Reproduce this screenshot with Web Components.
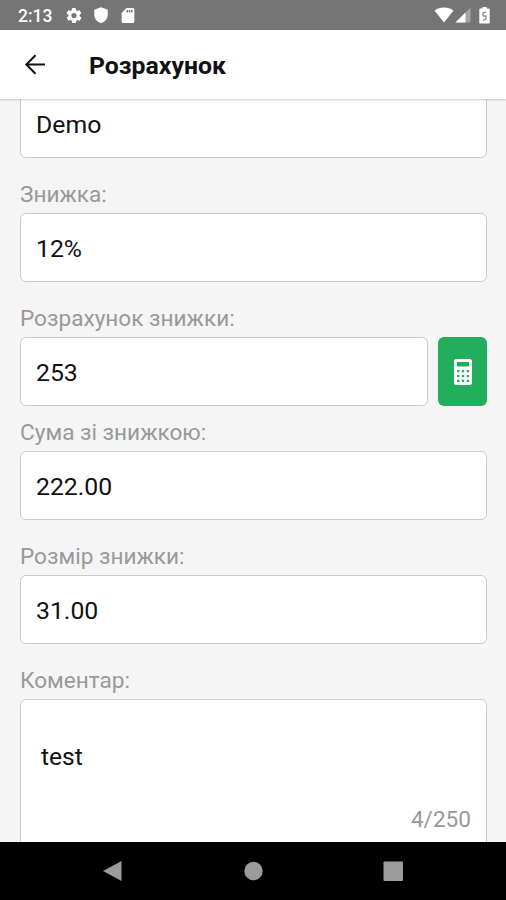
<!DOCTYPE html>
<html lang="uk">
<head>
<meta charset="utf-8">
<meta name="viewport" content="width=device-width, initial-scale=1">
<title>Розрахунок</title>
<style>
    body {
        margin: 0;
        font-family: Roboto, "Liberation Sans", sans-serif;
        color: #111;
        background: #000;
    }
</style>
</head>
<body>
<calc-screen>
    <status-bar slot="top" time="2:13"></status-bar>
    <app-header slot="top">Розрахунок</app-header>

    <form-field>Demo</form-field>
    <form-field label="Знижка:">12%</form-field>
    <form-field label="Розрахунок знижки:" tight>
        253
        <calc-button slot="action"></calc-button>
    </form-field>
    <form-field label="Сума зі знижкою:">222.00</form-field>
    <form-field label="Розмір знижки:">31.00</form-field>
    <comment-field label="Коментар:" counter="4/250">test</comment-field>

    <nav-bar slot="bottom"></nav-bar>
</calc-screen>

<script>
    class CalcScreen extends HTMLElement {
        constructor() {
            super();
            const shadow = this.attachShadow({ mode: 'open' });

            shadow.innerHTML = `
                <style>
                    :host {
                        display: flex;
                        flex-direction: column;
                        width: 506px;
                        height: 900px;
                        overflow: hidden;
                    }

                    main {
                        flex: 1;
                        min-height: 0;
                        overflow: hidden;
                        background: #f5f5f5;
                    }

                    /* The form is scrolled a little under the header */
                    .form {
                        margin-top: -10px;
                        padding: 0 19px 0 20px;
                    }
                </style>
                <slot name="top"></slot>
                <main><div class="form"><slot></slot></div></main>
                <slot name="bottom"></slot>
            `;
        }
    }

    class StatusBar extends HTMLElement {
        constructor() {
            super();
            const shadow = this.attachShadow({ mode: 'open' });

            shadow.innerHTML = `
                <style>
                    :host {
                        display: flex;
                        flex: none;
                        justify-content: space-between;
                        box-sizing: border-box;
                        height: 30px;
                        padding: 0 16px 0 18px;
                        background: #757575;
                        color: #fff;
                    }

                    div {
                        display: flex;
                        align-items: center;
                    }

                    span {
                        width: 47px;
                        font-size: 17.5px;
                        font-weight: 500;
                        letter-spacing: 0;
                        line-height: 30px;
                        padding-top: 2px;
                    }

                    svg {
                        display: block;
                        fill: currentColor;
                    }
                </style>
                <div>
                    <span>${this.getAttribute('time')}</span>
                    <svg width="18" height="19" viewBox="0 0 24 24"><path d="M19.4 13c.1-.3.1-.7.1-1s0-.7-.1-1l2.1-1.600a.5.5 0 0 0 .1-.6l-2-3.500a.5.5 0 0 0-.6-.2l-2.500 1a7.300 7.300 0 0 0-1.700-1l-.4-2.600a.5.5 0 0 0-.5-.5h-4a.5.5 0 0 0-.5.500l-.4 2.600a7.600 7.600 0 0 0-1.700 1l-2.500-1a.5.5 0 0 0-.6.2l-2 3.500c-.1.2-.1.5.1.6L4.600 11c0 .3-.1.7-.1 1s0 .7.1 1l-2.100 1.600a.5.5 0 0 0-.1.6l2 3.500c.1.2.4.3.6.2l2.500-1c.5.4 1.100.7 1.700 1l.4 2.600c0 .3.2.5.5.5h4c.3 0 .5-.2.5-.5l.4-2.600c.6-.3 1.200-.6 1.700-1l2.500 1c.2.1.5 0 .6-.2l2-3.500a.5.5 0 0 0-.1-.6zM12 15.500a3.500 3.500 0 1 1 0-7 3.500 3.500 0 0 1 0 7z"/></svg>
                    <svg width="18" height="18" viewBox="0 0 24 24" style="margin-left: 9px"><path d="M12 1.500 3 5v6.500c0 5.200 3.800 9.800 9 11 5.200-1.200 9-5.800 9-11V5z"/></svg>
                    <svg width="18" height="19" viewBox="0 0 24 24" style="margin-left: 9px"><path fill-rule="evenodd" d="M18.500 2H10L3.500 8.500V20c0 1.100.9 2 2 2h13c1.100 0 2-.9 2-2V4c0-1.100-.9-2-2-2zM12 8h-2V4.500h2zm3 0h-2V4.500h2zm3 0h-2V4.500h2z"/></svg>
                </div>
                <div>
                    <svg width="20" height="16" viewBox="0 0 20 16"><path d="M10 15.500.5 3.500C3 1.500 6.300.500 10 .500s7 1 9.500 3z"/></svg>
                    <svg width="16" height="16" viewBox="0 0 16 16" style="margin-left: 1px"><path opacity=".35" d="M.5 15.500 15.500.500v15z"/><path d="M.5 15.500 10.500 5.500v10z"/></svg>
                    <svg width="11" height="17" viewBox="0 0 11 17" style="margin-left: 8px"><path d="M3.300 0h4.400v1.600h2.100c.5 0 .9.4.9.9v13.200c0 .5-.4.9-.9.9H1.200a.9.900 0 0 1-.9-.9V2.500c0-.5.4-.9.9-.9h2.100z"/><path fill="none" stroke="#757575" stroke-width="1.100" d="M7 5 4 6v3h3v3l-3 1.500"/></svg>
                </div>
            `;
        }
    }

    class AppHeader extends HTMLElement {
        constructor() {
            super();
            const shadow = this.attachShadow({ mode: 'open' });

            shadow.innerHTML = `
                <style>
                    :host {
                        display: flex;
                        flex: none;
                        align-items: center;
                        position: relative;
                        box-sizing: border-box;
                        height: 69px;
                        padding-left: 23px;
                        background: #fff;
                        box-shadow: 0 1px 2px rgba(0, 0, 0, 0.2);
                    }

                    svg {
                        width: 24px;
                        height: 24px;
                        margin-right: 42px;
                        fill: none;
                        stroke: #111;
                        stroke-width: 2;
                    }

                    h1 {
                        margin: 0;
                        padding-top: 3px;
                        font-size: 24.8px;
                        font-weight: 700;
                        line-height: 30px;
                    }
                </style>
                <svg viewBox="0 0 24 24"><path d="M22 11.500H4M12.500 2.300 3.300 11.500l9.200 9.200"/></svg>
                <h1><slot></slot></h1>
            `;
        }
    }

    class FormField extends HTMLElement {
        constructor() {
            super();
            const shadow = this.attachShadow({ mode: 'open' });
            const label = this.getAttribute('label');

            shadow.innerHTML = `
                <style>
                    :host {
                        display: block;
                        margin-bottom: 20px;
                    }

                    :host([tight]) {
                        margin-bottom: 10px;
                    }

                    label {
                        display: block;
                        height: 35px;
                        color: #999;
                        font-size: 22.6px;
                        line-height: 34px;
                    }

                    .row {
                        display: flex;
                        gap: 10px;
                    }

                    .box {
                        flex: 1;
                        box-sizing: border-box;
                        height: 69px;
                        padding: 1px 15px 0;
                        border: 1px solid #c5cecc;
                        border-radius: 6px;
                        background: #fff;
                        font-size: 24.8px;
                        line-height: 67px;
                    }
                </style>
                ${label ? `<label>${label}</label>` : ''}
                <div class="row">
                    <div class="box"><slot></slot></div>
                    <slot name="action"></slot>
                </div>
            `;
        }
    }

    class CalcButton extends HTMLElement {
        constructor() {
            super();
            const shadow = this.attachShadow({ mode: 'open' });

            shadow.innerHTML = `
                <style>
                    :host {
                        display: flex;
                        flex: none;
                        align-items: center;
                        justify-content: center;
                        width: 49px;
                        height: 69px;
                        border-radius: 6px;
                        background: #22ae5c;
                    }
                </style>
                <svg width="18" height="26" viewBox="0 0 18 26">
                    <rect width="18" height="26" rx="2.500" fill="#fff"/>
                    <g fill="#22ae5c">
                        <rect x="3" y="3" width="12" height="4.500"/>
                        <path d="M3 11h2.300v2.300H3zM7.900 11h2.300v2.300H7.900zM12.700 11H15v2.300h-2.300zM3 15.900h2.300v2.300H3zM7.900 15.900h2.300v2.300H7.900zM12.700 15.900H15v2.300h-2.300zM3 20.800h2.300v2.300H3zM7.900 20.800h2.300v2.300H7.900zM12.700 20.800H15v2.300h-2.300z"/>
                    </g>
                </svg>
            `;
        }
    }

    class CommentField extends HTMLElement {
        constructor() {
            super();
            const shadow = this.attachShadow({ mode: 'open' });

            shadow.innerHTML = `
                <style>
                    :host {
                        display: block;
                    }

                    label {
                        display: block;
                        height: 35px;
                        color: #999;
                        font-size: 22.6px;
                        line-height: 34px;
                    }

                    .box {
                        display: flex;
                        flex-direction: column;
                        justify-content: space-between;
                        box-sizing: border-box;
                        height: 160px;
                        padding: 42px 15px 23px 20px;
                        border: 1px solid #c5cecc;
                        border-radius: 6px;
                        background: #fff;
                        font-size: 24.5px;
                        line-height: 30px;
                    }

                    .counter {
                        align-self: flex-end;
                        color: #999;
                        font-size: 22.6px;
                    }
                </style>
                <label>${this.getAttribute('label')}</label>
                <div class="box">
                    <div><slot></slot></div>
                    <div class="counter">${this.getAttribute('counter')}</div>
                </div>
            `;
        }
    }

    class NavBar extends HTMLElement {
        constructor() {
            super();
            const shadow = this.attachShadow({ mode: 'open' });

            shadow.innerHTML = `
                <style>
                    :host {
                        display: flex;
                        flex: none;
                        align-items: center;
                        justify-content: space-between;
                        box-sizing: border-box;
                        height: 58px;
                        padding: 0 103px 0 102px;
                        background: #000;
                    }

                    svg {
                        width: 20px;
                        height: 22px;
                        fill: #9c9c9c;
                    }
                </style>
                <svg viewBox="0 0 20 22"><path d="M19.500 1v20L1 11z"/></svg>
                <svg viewBox="0 0 20 22"><circle cx="10.500" cy="11" r="9.200"/></svg>
                <svg viewBox="0 0 20 22"><rect x=".5" y="1.500" width="19.500" height="19.500" rx="1"/></svg>
            `;
        }
    }

    customElements.define('calc-screen', CalcScreen);
    customElements.define('status-bar', StatusBar);
    customElements.define('app-header', AppHeader);
    customElements.define('form-field', FormField);
    customElements.define('calc-button', CalcButton);
    customElements.define('comment-field', CommentField);
    customElements.define('nav-bar', NavBar);
</script>
</body>
</html>
